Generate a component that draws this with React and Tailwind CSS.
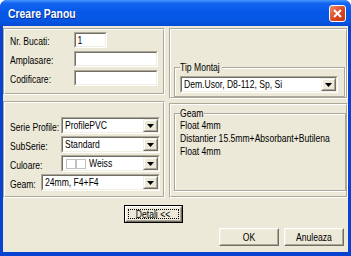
import React from 'react'

const FONT = "font-['Liberation_Sans',Arial,sans-serif]"

// narrow text: Tahoma-like width from Arial metrics
const T = ({ children, className = '' }) => (
  <span className={`inline-block origin-left scale-x-[0.78] whitespace-nowrap text-[11px] leading-[13px] ${className}`}>
    {children}
  </span>
)

const Sunken = ({ className = '', children }) => (
  <div className={`border border-t-[#aca899] border-l-[#aca899] border-r-white border-b-white ${className}`}>
    <div className="h-full w-full border border-t-[#716f64] border-l-[#716f64] border-r-[#f1efe2] border-b-[#f1efe2] bg-white flex items-center overflow-hidden">
      {children}
    </div>
  </div>
)

const Arrow = () => (
  <div className="h-full w-[15px] shrink-0 border border-t-[#f1efe2] border-l-[#f1efe2] border-r-[#716f64] border-b-[#716f64]">
    <div className="h-full w-full border border-t-white border-l-white border-r-[#aca899] border-b-[#aca899] bg-[#ece9d8] flex items-center justify-center">
      <svg width="7" height="4" viewBox="0 0 7 4">
        <path d="M0 0h7L3.5 4z" fill="#000" />
      </svg>
    </div>
  </div>
)

const Select = ({ className = '', children }) => (
  <Sunken className={`h-[17px] ${className}`}>
    <div className="flex-1 flex items-center pl-[2px] overflow-hidden">
      {children}
    </div>
    <Arrow />
  </Sunken>
)

const Panel = ({ className = '', children }) => (
  <div className={`border border-t-[#aca899] border-l-[#aca899] border-r-white border-b-white ${className}`}>
    <div className="h-full w-full border border-t-white border-l-white border-r-[#aca899] border-b-[#aca899] overflow-hidden">
      {children}
    </div>
  </div>
)

const Group = ({ label, labelW, className = '', children }) => (
  <div className={`relative border border-[#aca899] shadow-[inset_1px_1px_0_#fff,1px_1px_0_#fff] ${className}`}>
    <div className={`absolute left-[5px] top-[-7px] bg-[#ece9d8] h-[13px] flex ${labelW}`}>
      <T>{label}</T>
    </div>
    {children}
  </div>
)

const Button = ({ children, isDefault, className = '' }) => (
  <div className={`${isDefault ? 'border border-black' : ''} ${className}`}>
    <div className="h-full w-full border border-t-white border-l-white border-r-[#716f64] border-b-[#716f64]">
      <div className="h-full w-full border border-t-[#f1efe2] border-l-[#f1efe2] border-r-[#aca899] border-b-[#aca899] bg-[#ece9d8] p-[1px]">
        <div className={`h-full w-full flex items-center justify-center ${isDefault ? 'border border-dotted border-black' : ''}`}>
          <span className="inline-block origin-center scale-x-[0.78] whitespace-nowrap text-[11px] leading-none">{children}</span>
        </div>
      </div>
    </div>
  </div>
)

export default function App() {
  return (
    <div className={`w-[351px] h-[256px] bg-[#0842d0] rounded-t-[7px] overflow-hidden flex flex-col ${FONT} text-[11px] leading-[13px] text-black`}>
      <div className="h-[26px] shrink-0 flex items-center justify-between pl-[8px] pr-[5px] bg-[linear-gradient(to_bottom,#4a98ff_0%,#1466f0_12%,#0558e8_45%,#0556e4_80%,#054ad2_100%)]">
        <span className="inline-block origin-left scale-x-[0.8] text-white font-bold text-[13px] leading-none [text-shadow:1px_1px_0_#0a2a8a]">Creare Panou</span>
        <div className="w-[17px] h-[17px] rounded-[3px] border border-white bg-[linear-gradient(135deg,#ee8a6a,#d9461f_55%,#c23a16)] flex items-center justify-center">
          <svg width="9" height="9" viewBox="0 0 9 9">
            <path d="M1 1l7 7M8 1L1 8" stroke="#fff" strokeWidth="2" />
          </svg>
        </div>
      </div>

      <div className="flex-1 mx-[3px] mb-[4px] bg-[#ece9d8] flex flex-col">
        <div className="flex gap-[4px] mt-[2px]">
          <div className="w-[184px] flex flex-col gap-[6px]">
            <Panel className="h-[67px]">
              <div className="flex flex-col gap-[3px] pl-[5px] pt-[2px]">
                <div className="flex items-center h-[16px]">
                  <div className="w-[64px] flex pt-[3px]"><T>Nr. Bucati:</T></div>
                  <Sunken className="w-[33px] h-[16px]">
                    <T className="pl-[2px]">1</T>
                  </Sunken>
                </div>
                <div className="flex items-center h-[16px]">
                  <div className="w-[64px] flex pt-[3px]"><T>Amplasare:</T></div>
                  <Sunken className="w-[84px] h-[16px]" />
                </div>
                <div className="flex items-center h-[16px]">
                  <div className="w-[64px] flex pt-[3px]"><T>Codificare:</T></div>
                  <Sunken className="w-[84px] h-[16px]" />
                </div>
              </div>
            </Panel>
            <Panel className="h-[97px]">
              <div className="flex flex-col gap-[2px] pl-[5px] pr-[3px] pt-[14px]">
                <div className="flex items-center">
                  <div className="w-[51px] flex pt-[3px]"><T>Serie Profile:</T></div>
                  <Select className="flex-1"><T>ProfilePVC</T></Select>
                </div>
                <div className="flex items-center">
                  <div className="w-[51px] flex pt-[3px]"><T>SubSerie:</T></div>
                  <Select className="flex-1"><T>Standard</T></Select>
                </div>
                <div className="flex items-center">
                  <div className="w-[51px] flex pt-[3px]"><T>Culoare:</T></div>
                  <Select className="flex-1">
                    <span className="w-[10px] h-[10px] shrink-0 border border-[#c0c0c0] bg-white ml-[1px]" />
                    <span className="w-[10px] h-[10px] shrink-0 border border-[#c0c0c0] bg-white" />
                    <T className="ml-[3px]">Weiss</T>
                  </Select>
                </div>
                <div className="flex items-center">
                  <div className="w-[31px] flex pt-[3px]"><T>Geam:</T></div>
                  <Select className="flex-1"><T>24mm, F4+F4</T></Select>
                </div>
              </div>
            </Panel>
          </div>

          <div className="flex-1 flex flex-col gap-[4px]">
            <Panel className="h-[71px]">
              <div className="pl-[3px] pr-[1px] pt-[37px]">
                <Group label="Tip Montaj" labelW="w-[42px]" className="h-[30px] pt-[8px] pl-[5px] pr-[6px]">
                  <Select><T>Dem.Usor, D8-112, Sp, Si</T></Select>
                </Group>
              </div>
            </Panel>
            <Panel className="h-[95px]">
              <div className="pl-[3px] pt-[8px] w-[175px]">
                <Group label="Geam" labelW="w-[24px]" className="h-[78px] pt-[5px] pl-[5px]">
                  <div className="flex flex-col">
                    <T>Float 4mm</T>
                    <T>Distantier 15.5mm+Absorbant+Butilena</T>
                    <T>Float 4mm</T>
                  </div>
                </Group>
              </div>
            </Panel>
          </div>
        </div>

        <div className="w-[184px] flex justify-end pr-[4px] mt-[7px]">
          <Button isDefault className="w-[59px] h-[18px]">Detali &lt;&lt;</Button>
        </div>

        <div className="flex justify-end gap-[5px] pr-[4px] mt-[5px]">
          <Button className="w-[60px] h-[18px]">OK</Button>
          <Button className="w-[60px] h-[18px]">Anuleaza</Button>
        </div>
      </div>
    </div>
  )
}
